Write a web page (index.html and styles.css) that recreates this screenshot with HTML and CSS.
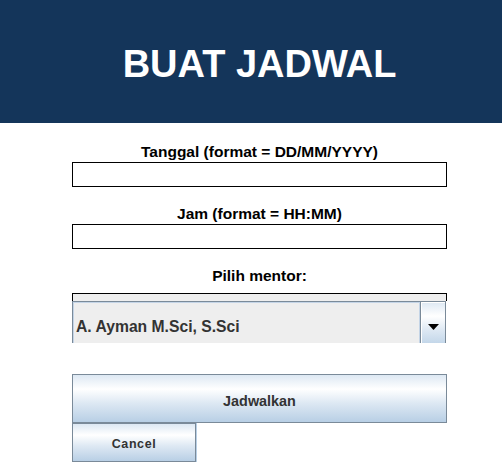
FILE: index.html
```html
<!DOCTYPE html>
<html lang="id">
<head>
<meta charset="utf-8">
<title>Buat Jadwal</title>
<link rel="stylesheet" href="styles.css">
</head>
<body>
<header class="header">
  <h1 class="title">BUAT JADWAL</h1>
</header>
<main class="form">
  <div class="group">
    <label class="label">Tanggal (format = DD/MM/YYYY)</label>
    <div class="field"></div>
  </div>
  <div class="group">
    <label class="label">Jam (format = HH:MM)</label>
    <div class="field"></div>
  </div>
  <div class="group">
    <label class="label">Pilih mentor:</label>
    <div class="mentor-box">
      <div class="mentor-strip"></div>
      <div class="combo">
        <div class="combo-value">A. Ayman M.Sci, S.Sci</div>
        <div class="combo-arrow">
          <svg width="11" height="6" viewBox="0 0 11 6"><polygon points="0,0 11,0 5.5,6" fill="#000"/></svg>
        </div>
      </div>
    </div>
  </div>
  <div class="buttons">
    <button class="btn btn-primary">Jadwalkan</button>
    <button class="btn btn-cancel">Cancel</button>
  </div>
</main>
</body>
</html>
```
FILE: styles.css
```css
html, body {
  margin: 0;
  padding: 0;
  background: #ffffff;
  width: 502px;
  height: 473px;
  overflow: hidden;
  font-family: "Liberation Sans", Arial, sans-serif;
}

.header {
  height: 123px;
  box-sizing: border-box;
  padding-top: 5px;
  padding-left: 17px;
  background: #14355a;
  display: flex;
  align-items: center;
  justify-content: center;
}

.title {
  margin: 0;
  color: #ffffff;
  font-size: 38px;
  font-weight: bold;
  line-height: 42px;
}

.form {
  width: 375px;
  margin-left: 72px;
  padding-top: 19px;
  display: flex;
  flex-direction: column;
}

.group {
  display: flex;
  flex-direction: column;
  margin-bottom: 17px;
}

.label {
  display: block;
  text-align: center;
  font-size: 15.5px;
  font-weight: bold;
  line-height: 19px;
  color: #000;
  margin-bottom: 1px;
}

.field {
  height: 25px;
  box-sizing: border-box;
  border: 1px solid #000;
  background: #fff;
}

.mentor-box {
  margin-top: 7px;
  height: 50px;
  overflow: hidden;
  display: flex;
  flex-direction: column;
}

.mentor-strip {
  height: 8px;
  flex: none;
  box-sizing: border-box;
  border: 1px solid #000;
  border-bottom: none;
  background: #eeeeee;
}

.combo {
  flex: none;
  width: 374px;
  height: 49px;
  box-sizing: border-box;
  border: 1px solid #7a8a99;
  display: flex;
  background: #eeeeee;
}

.combo-value {
  flex: 1;
  box-sizing: border-box;
  border: 1px solid #c4d4e6;
  border-bottom: none;
  padding-left: 2px;
  display: flex;
  align-items: center;
  padding-top: 2px;
  font-size: 15.7px;
  font-weight: bold;
  color: #333333;
}

.combo-arrow {
  width: 24px;
  flex: none;
  border-left: 1px solid #7a8a99;
  box-shadow: inset 1px 1px 0 #ffffff;
  background: linear-gradient(to bottom, #dde8f3 0%, #ffffff 30%, #dde8f3 60%, #b8cfe5 100%);
  display: flex;
  align-items: center;
  justify-content: center;
  padding-top: 2px;
}

.buttons {
  margin-top: 14px;
  display: flex;
  flex-direction: column;
  align-items: flex-start;
}

.btn {
  margin: 0;
  padding: 0;
  box-sizing: border-box;
  border: 1px solid #7a8a99;
  background: linear-gradient(to bottom, #dde8f3 0%, #ffffff 30%, #dde8f3 60%, #b8cfe5 100%);
  font-family: "Liberation Sans", Arial, sans-serif;
  font-weight: bold;
  color: #333333;
  display: flex;
  align-items: center;
  justify-content: center;
}

.btn-primary {
  width: 375px;
  height: 49px;
  font-size: 14.4px;
  padding-top: 4px;
}

.btn-cancel {
  width: 124px;
  height: 39px;
  font-size: 12.5px;
  letter-spacing: 0.6px;
  padding-top: 2px;
  box-shadow: 1px 0 0 #b8cfe5;
}
```
